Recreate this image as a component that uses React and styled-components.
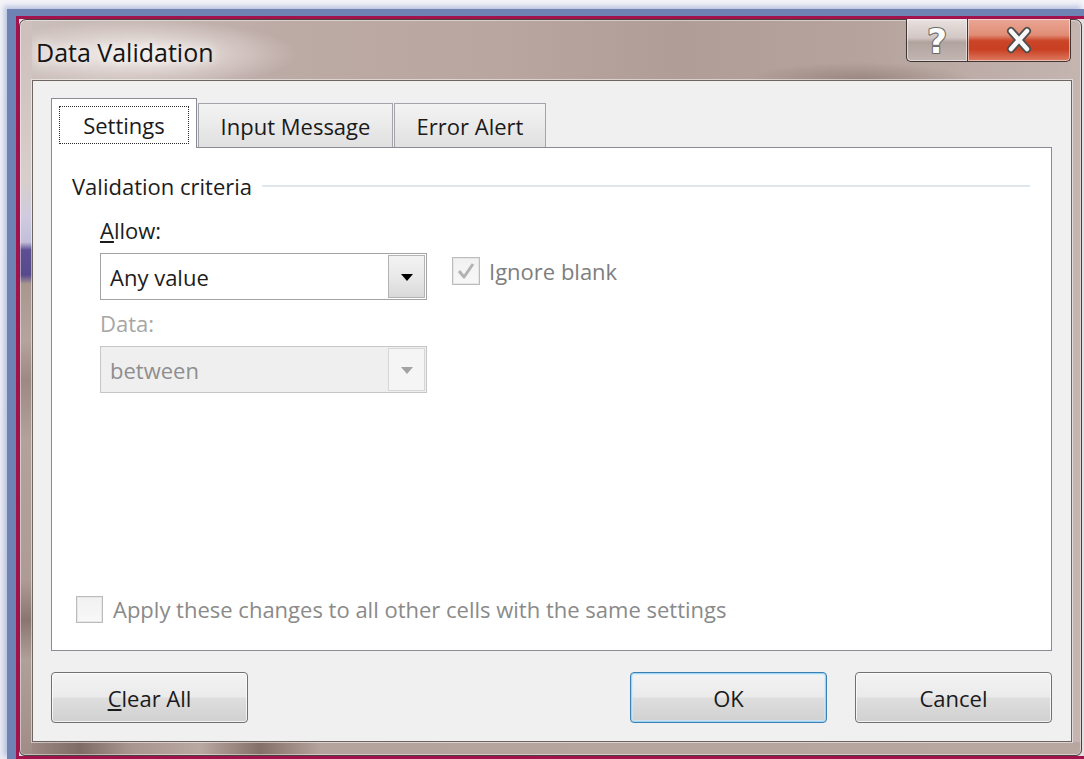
import React from "react";
import styled, { createGlobalStyle } from "styled-components";

const GlobalStyle = createGlobalStyle`
  html, body {
    margin: 0;
    padding: 0;
  }
  body {
    width: 1084px;
    height: 759px;
    overflow: hidden;
    background: #eeeff6;
    font-family: "Open Sans", "Noto Sans", sans-serif;
    color: #1c1c1c;
  }
  * { box-sizing: border-box; }
`;

/* Desktop surround: pale backdrop, blue glow and crimson accent line */
const Backdrop = styled.div`
  width: 1084px;
  height: 759px;
  padding: 9px 0 0 7px;
  overflow: hidden;
  background: linear-gradient(180deg, #f3f3f8 0%, #e9eaf3 100%);
`;

const GlowEdge = styled.div`
  height: 100%;
  border-top: 7px solid #6e83b4;
  border-left: 9px solid #6e83b4;
  box-shadow: -3px -3px 5px rgba(140, 158, 205, 0.55);
`;

const AccentEdge = styled.div`
  height: 100%;
  padding-right: 2px;
  border-top: 3px solid #a2124d;
  border-left: 3px solid #a2124d;
  border-bottom: 3px solid #a2124d;
  background: #e4dfe0;
`;

/* Aero glass window frame */
const Window = styled.div`
  height: 100%;
  display: flex;
  flex-direction: column;
  padding: 0 9px 13px 12px;
  border: 1px solid #4a3f3c;
  border-radius: 7px 7px 6px 6px;
  box-shadow: inset 0 0 0 1px rgba(255, 255, 255, 0.45);
  background:
    linear-gradient(180deg,
      #cdbfbb 0, #d8cecb 160px, #d0cbdf 195px, #c3bfdb 222px,
      #5d4f92 230px, #574a8c 255px, #a8968f 264px, #b5a39d 320px,
      #9d8983 360px, #b3a19b 420px, #ae9b95 560px, #8a7670 600px,
      #b0a09a 640px, #a08c86 737px) 0 0 / 12px 100% no-repeat,
    linear-gradient(90deg,
      #a48f89 0, #7f6c67 60px, #a89590 110px, #b9a7a1 180px,
      #857069 240px, #b4a29c 300px, #b8a6a0 100%) 0 100% / 100% 13px no-repeat,
    radial-gradient(ellipse 210px 46px at 120px 34px,
      rgba(246, 240, 238, 0.95), rgba(240, 232, 230, 0) 75%),
    radial-gradient(ellipse 140px 22px at 840px 60px,
      rgba(120, 100, 95, 0.45), rgba(120, 100, 95, 0) 80%),
    linear-gradient(90deg,
      #cbbfbb 0%, #bcaaa5 25%, #b9a6a0 45%, #b09d97 62%,
      #b6a39d 80%, #c4b5b1 100%);
`;

const TitleBar = styled.div`
  height: 60px;
  flex: none;
  display: flex;
  justify-content: space-between;
  align-items: flex-start;
`;

const Title = styled.div`
  margin: 15px 0 0 4px;
  font-size: 25px;
  line-height: 34px;
  color: #151515;
  text-shadow:
    0 0 8px rgba(255, 255, 255, 0.95),
    0 0 16px rgba(255, 255, 255, 0.7);
`;

const Controls = styled.div`
  display: flex;
  margin: -1px 1px 0 0;
`;

const CaptionButton = styled.div`
  height: 43px;
  display: flex;
  align-items: center;
  justify-content: center;
  border: 1px solid #3f3532;
  border-top: none;
  box-shadow: inset 0 0 0 1px rgba(255, 255, 255, 0.5);
  svg {
    overflow: visible;
  }
`;

const HelpButton = styled(CaptionButton)`
  width: 61px;
  border-right: none;
  border-radius: 0 0 0 5px;
  background: linear-gradient(180deg,
    rgba(238, 232, 230, 0.9) 0%,
    rgba(214, 204, 201, 0.85) 45%,
    rgba(176, 162, 157, 0.9) 55%,
    rgba(196, 184, 180, 0.9) 100%);
`;

const CloseButton = styled(CaptionButton)`
  width: 104px;
  border-radius: 0 0 5px 0;
  background: linear-gradient(180deg,
    #eaa695 0%, #e18d76 38%, #cb4529 52%, #c93f22 72%, #dc7a60 100%);
`;

/* Dialog client area */
const Client = styled.div`
  flex: 1;
  display: flex;
  flex-direction: column;
  padding: 17px 19px 18px 18px;
  background: #f0f0f0;
  border: 1px solid #6f6461;
  box-shadow: 0 0 0 1px rgba(255, 255, 255, 0.5);
`;

const TabStrip = styled.div`
  height: 49px;
  flex: none;
  display: flex;
  align-items: flex-end;
  position: relative;
  z-index: 1;
`;

const Tab = styled.div`
  width: ${(p) => p.$w}px;
  height: ${(p) => (p.$active ? 50 : 44)}px;
  margin-bottom: ${(p) => (p.$active ? -1 : 0)}px;
  display: flex;
  justify-content: center;
  align-items: ${(p) => (p.$active ? "flex-start" : "center")};
  padding-top: ${(p) => (p.$active ? 7 : 0)}px;
  font-size: 22px;
  color: #1a1a1a;
  border: 1px solid ${(p) => (p.$active ? "#898c95" : "#a3a5ab")};
  border-bottom: none;
  background: ${(p) =>
    p.$active
      ? "#ffffff"
      : "linear-gradient(180deg, #f3f3f3 0%, #ebebeb 45%, #e0e0e0 100%)"};
  & + & {
    margin-left: ${(p) => (p.$active ? 0 : 1)}px;
  }
`;

const FocusRing = styled.span`
  width: 130px;
  height: 38px;
  display: flex;
  align-items: center;
  justify-content: center;
  border: 1px dotted #2a2a2a;
`;

const Panel = styled.div`
  flex: 1;
  display: flex;
  flex-direction: column;
  background: #ffffff;
  border: 1px solid #898c95;
`;

const GroupHeader = styled.div`
  height: 30px;
  margin: 23px 21px 0 20px;
  display: flex;
  align-items: center;
  gap: 10px;
  font-size: 22px;
`;

const Rule = styled.div`
  flex: 1;
  height: 2px;
  background: #dfe6ec;
`;

const Criteria = styled.div`
  margin: 14px 0 0 48px;
  display: flex;
  flex-direction: column;
  gap: 8px;
`;

const FieldLabel = styled.div`
  height: 30px;
  line-height: 30px;
  font-size: 22px;
  color: ${(p) => (p.$disabled ? "#a6a6a6" : "#1c1c1c")};
`;

const FieldRow = styled.div`
  display: flex;
  align-items: flex-start;
  gap: 25px;
`;

const Select = styled.div`
  width: 327px;
  height: 47px;
  display: flex;
  border: 1px solid ${(p) => (p.$disabled ? "#c6c6c6" : "#a3a3a3")};
  background: ${(p) => (p.$disabled ? "#efefef" : "#ffffff")};
`;

const SelectValue = styled.div`
  flex: 1;
  display: flex;
  align-items: center;
  padding-left: 9px;
  font-size: 22px;
  color: ${(p) => (p.$disabled ? "#8e8e8e" : "#1c1c1c")};
`;

const DropButton = styled.div`
  width: 37px;
  margin: 1px 1px 1px 0;
  display: flex;
  align-items: center;
  justify-content: center;
  border: 1px solid ${(p) => (p.$disabled ? "#d6d6d6" : "#b3b3b3")};
  background: ${(p) =>
    p.$disabled
      ? "#f5f5f5"
      : "linear-gradient(180deg, #f3f3f3 0%, #e9e9e9 50%, #d9d9d9 100%)"};
`;

const Arrow = styled.span`
  width: 0;
  height: 0;
  margin-top: 2px;
  border-left: 6px solid transparent;
  border-right: 6px solid transparent;
  border-top: 7px solid ${(p) => (p.$disabled ? "#a3a3a3" : "#000000")};
`;

const CheckRow = styled.div`
  display: flex;
  align-items: center;
  gap: ${(p) => p.$gap}px;
  margin: ${(p) => p.$margin};
  font-size: 22px;
  color: ${(p) => p.$color};
`;

const CheckBox = styled.span`
  width: ${(p) => p.$size}px;
  height: ${(p) => p.$size}px;
  flex: none;
  display: flex;
  align-items: center;
  justify-content: center;
  border: 1px solid #bcbcbc;
  background: linear-gradient(180deg, #f1f1f1, #f8f8f8);
  box-shadow: inset 0 0 0 1px #e6e6e6;
`;

const ButtonRow = styled.div`
  margin-top: 21px;
  display: flex;
  justify-content: space-between;
`;

const ButtonGroup = styled.div`
  display: flex;
  gap: 28px;
`;

const Button = styled.div`
  width: 197px;
  height: 51px;
  display: flex;
  align-items: center;
  justify-content: center;
  font-size: 22px;
  color: #1a1a1a;
  border: 1px solid ${(p) => (p.$primary ? "#3c7fb1" : "#707070")};
  border-radius: 4px;
  background: linear-gradient(180deg,
    #f3f3f3 0%, #ebebeb 48%, #dedede 52%, #d0d0d0 100%);
  box-shadow: ${(p) =>
    p.$primary
      ? "inset 0 0 0 1px #9fd5f3, inset 0 0 0 2px rgba(200,235,252,0.6)"
      : "inset 0 0 0 1px rgba(255,255,255,0.75)"};
`;

function HelpIcon() {
  return (
    <svg width="34" height="38" viewBox="0 0 34 38">
      <text
        x="17"
        y="32"
        textAnchor="middle"
        fontFamily="DejaVu Sans, sans-serif"
        fontWeight="700"
        fontSize="34"
        fill="#fdfdfd"
        stroke="#6a6a6a"
        strokeWidth="2.2"
        paintOrder="stroke"
        strokeLinejoin="round"
      >
        ?
      </text>
    </svg>
  );
}

function CloseIcon() {
  return (
    <svg width="30" height="26" viewBox="0 0 30 26">
      <path d="M7 4 L23 22 M23 4 L7 22" stroke="#4d4d4d" strokeWidth="8" strokeLinecap="round" />
      <path d="M7 4 L23 22 M23 4 L7 22" stroke="#f8f8f8" strokeWidth="4.5" strokeLinecap="round" />
    </svg>
  );
}

function CheckMark() {
  return (
    <svg width="20" height="18" viewBox="0 0 20 18">
      <path d="M3 9 L8 15 L17 2" fill="none" stroke="#b3b3b3" strokeWidth="3" strokeLinejoin="round" />
    </svg>
  );
}

export default function App() {
  return (
    <>
      <GlobalStyle />
      <Backdrop>
        <GlowEdge>
          <AccentEdge>
            <Window>
              <TitleBar>
                <Title>Data Validation</Title>
                <Controls>
                  <HelpButton>
                    <HelpIcon />
                  </HelpButton>
                  <CloseButton>
                    <CloseIcon />
                  </CloseButton>
                </Controls>
              </TitleBar>
              <Client>
                <TabStrip>
                  <Tab $active $w={146}>
                    <FocusRing>Settings</FocusRing>
                  </Tab>
                  <Tab $w={195}>Input Message</Tab>
                  <Tab $w={152}>Error Alert</Tab>
                </TabStrip>
                <Panel>
                  <GroupHeader>
                    <span>Validation criteria</span>
                    <Rule />
                  </GroupHeader>
                  <Criteria>
                    <FieldLabel>
                      <u>A</u>llow:
                    </FieldLabel>
                    <FieldRow>
                      <Select>
                        <SelectValue>Any value</SelectValue>
                        <DropButton>
                          <Arrow />
                        </DropButton>
                      </Select>
                      <CheckRow $gap={9} $margin="3px 0 0 0" $color="#7e7e7e">
                        <CheckBox $size={28}>
                          <CheckMark />
                        </CheckBox>
                        Ignore blank
                      </CheckRow>
                    </FieldRow>
                    <FieldLabel $disabled>Data:</FieldLabel>
                    <FieldRow>
                      <Select $disabled>
                        <SelectValue $disabled>between</SelectValue>
                        <DropButton $disabled>
                          <Arrow $disabled />
                        </DropButton>
                      </Select>
                    </FieldRow>
                  </Criteria>
                  <CheckRow $gap={10} $margin="auto 0 26px 24px" $color="#8a8a8a">
                    <CheckBox $size={27} />
                    Apply these changes to all other cells with the same settings
                  </CheckRow>
                </Panel>
                <ButtonRow>
                  <Button>
                    <span>
                      <u>C</u>lear All
                    </span>
                  </Button>
                  <ButtonGroup>
                    <Button $primary>OK</Button>
                    <Button>Cancel</Button>
                  </ButtonGroup>
                </ButtonRow>
              </Client>
            </Window>
          </AccentEdge>
        </GlowEdge>
      </Backdrop>
    </>
  );
}
